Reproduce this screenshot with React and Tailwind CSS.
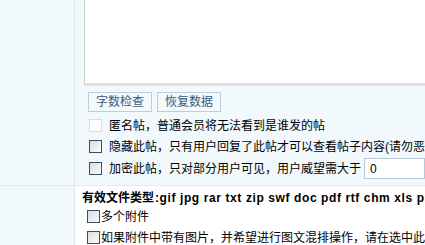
import React from "react";

function Box({ faded }) {
  return (
    <span
      className={
        faded
          ? "inline-block w-[13px] h-[13px] shrink-0 border border-[#d6dde3] bg-white"
          : "inline-block w-[13px] h-[13px] shrink-0 border border-[#3a4f66] bg-gradient-to-br from-[#dcdcdc] to-[#fbfbfb]"
      }
    />
  );
}

function Option({ faded, children, gap = "gap-[7px]" }) {
  return (
    <div className={`flex items-center ${gap} h-[21px]`}>
      <Box faded={faded} />
      <span>{children}</span>
    </div>
  );
}

export default function App() {
  return (
    <div
      className="w-[425px] h-[245px] overflow-hidden bg-white text-[12px] leading-[14px] text-black"
      style={{ fontFamily: '"Liberation Sans", "Noto Sans CJK SC", sans-serif' }}
    >
      <div className="grid grid-cols-[75px_1fr]">
        {/* left cells */}
        <div className="bg-[#f2f9fd] border-r border-[#dbe5ec] border-b border-b-[#dfeaf2]" />
        <div className="bg-[#f2f9fd] border-b border-[#dfeaf2] pl-[9px] h-[186px] overflow-hidden whitespace-nowrap">
          <div className="w-[420px] h-[86px] bg-white border-l border-[#c9ced2] border-b-[3px] border-b-[#dedede]" />
          <div className="flex gap-[5px] mt-[6px] pl-[4px]">
            <button className="h-[20px] px-[7px] border border-[#b9cfe0] bg-[#f4f9fc] text-[#3c5a78] text-[12px]">
              字数检查
            </button>
            <button className="h-[20px] px-[7px] border border-[#b9cfe0] bg-[#f4f9fc] text-[#3c5a78] text-[12px]">
              恢复数据
            </button>
          </div>
          <div className="pl-[5px] mt-[3px]">
            <Option faded>匿名帖，普通会员将无法看到是谁发的帖</Option>
            <Option>隐藏此帖，只有用户回复了此帖才可以查看帖子内容(请勿恶意使用)</Option>
            <div className="flex items-center gap-[7px] h-[23px]">
              <Box />
              <span>加密此帖，只对部分用户可见，用户威望需大于</span>
              <span className="ml-[-4px] w-[80px] h-[21px] border border-[#b7c9d6] bg-white pl-[5px] flex items-center">
                0
              </span>
            </div>
          </div>
        </div>

        <div className="bg-[#f2f9fd] border-r border-[#dbe5ec] h-[60px]" />
        <div className="bg-white pl-[7px] pt-[3px] overflow-hidden whitespace-nowrap">
          <div className="font-bold h-[17px] flex items-center">
            <span>有效文件类型</span>
            <span className="tracking-[0.6px] ml-[1px]">:gif jpg rar txt zip swf doc pdf rtf chm xls ppt</span>
          </div>
          <div className="pl-[5px]">
            <Option gap="gap-[1px]">多个附件</Option>
            <Option gap="gap-[1px]">如果附件中带有图片，并希望进行图文混排操作，请在选中此项</Option>
          </div>
        </div>
      </div>
    </div>
  );
}
